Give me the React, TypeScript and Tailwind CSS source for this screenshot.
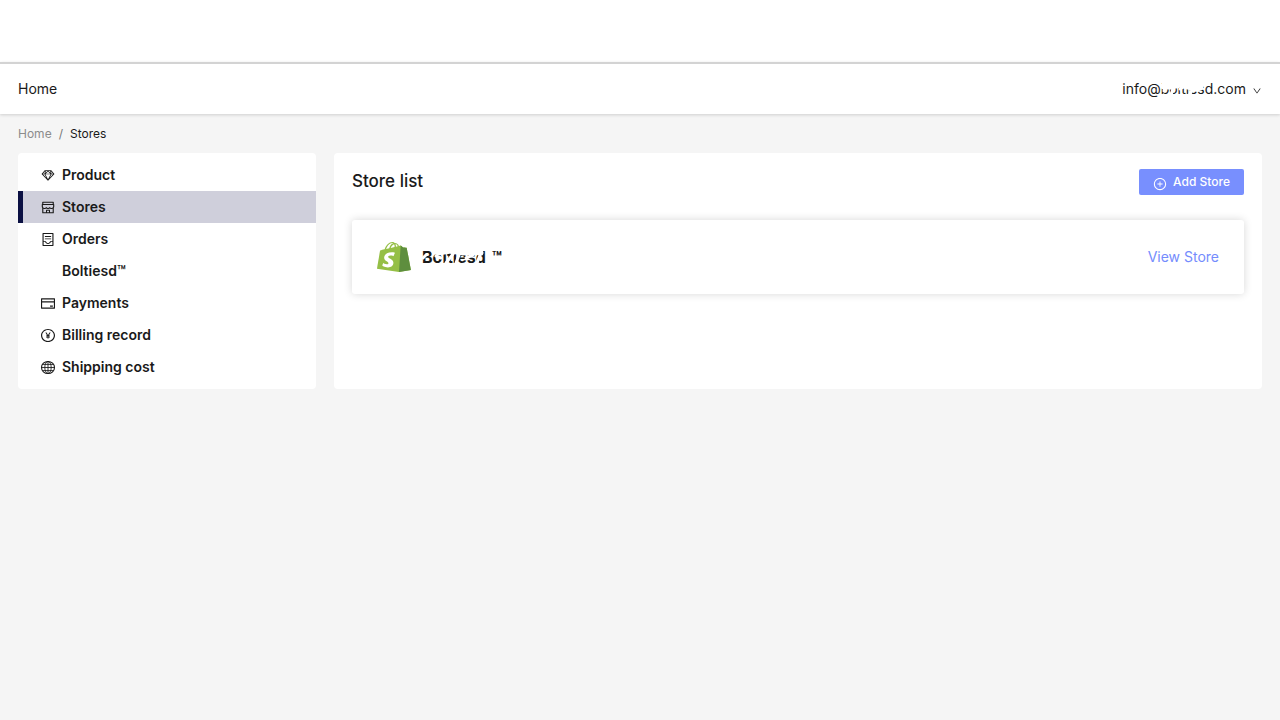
import * as React from "react";
import {
  AiOutlineContainer,
  AiOutlineCreditCard,
  AiOutlineDown,
  AiOutlinePayCircle,
  AiOutlinePlusCircle,
  AiOutlineShop,
  AiOutlineSketch,
} from "react-icons/ai";
import type { IconBaseProps } from "react-icons";
import clsx from "clsx";

function GlobeIcon(props: IconBaseProps) {
  return (
    <svg viewBox="0 0 16 16" fill="none" stroke="currentColor" {...props}>
      <circle cx="8" cy="8" r="6.5" strokeWidth="1.1" />
      <ellipse cx="8" cy="8" rx="3.2" ry="6.5" strokeWidth="0.9" />
      <path d="M8 1.5v13M1.5 8h13M2.6 4.7h10.8M2.6 11.3h10.8" strokeWidth="0.9" />
    </svg>
  );
}

function ShopifyLogo() {
  return (
    <svg
      viewBox="0 0 256 292"
      preserveAspectRatio="none"
      className="h-[30px] w-[34px] shrink-0"
      aria-hidden="true"
    >
      <path
        fill="#95BF46"
        d="M223.774 57.34c-.201-1.46-1.48-2.268-2.537-2.357-1.055-.088-23.383-1.743-23.383-1.743s-15.507-15.395-17.209-17.099c-1.703-1.703-5.029-1.185-6.32-.805-.19.056-3.388 1.043-8.678 2.68-5.18-14.906-14.322-28.604-30.405-28.604-.444 0-.901.018-1.358.044C129.31 3.407 123.644.779 118.75.779c-37.465 0-55.364 46.835-60.976 70.635-14.558 4.511-24.9 7.718-26.221 8.133-8.126 2.549-8.383 2.805-9.45 10.462C21.3 95.806.038 260.235.038 260.235l165.678 31.042 89.77-19.42S223.973 58.8 223.775 57.34zM156.49 40.848l-14.019 4.339c.005-.988.01-1.96.01-3.023 0-9.264-1.286-16.723-3.349-22.636 8.287 1.04 13.806 10.469 17.358 21.32zm-27.638-19.483c2.304 5.773 3.802 14.058 3.802 25.238 0 .572-.005 1.095-.01 1.624-9.117 2.824-19.024 5.89-28.953 8.966 5.575-21.516 16.025-31.908 25.161-35.828zm-11.131-10.537c1.617 0 3.246.549 4.805 1.622-12.007 5.65-24.877 19.88-30.312 48.297l-22.886 7.088C75.694 46.16 90.81 10.828 117.72 10.828z"
      />
      <path
        fill="#5E8E3E"
        d="M221.237 54.983c-1.055-.088-23.383-1.743-23.383-1.743s-15.507-15.395-17.209-17.099c-.637-.634-1.496-.959-2.394-1.099l-12.527 256.233 89.762-19.418S223.972 58.8 223.774 57.34c-.201-1.46-1.48-2.268-2.537-2.357"
      />
      <path
        fill="#FFF"
        d="M135.242 104.585l-11.069 32.926s-9.698-5.176-21.586-5.176c-17.428 0-18.305 10.937-18.305 13.693 0 15.038 39.2 20.8 39.2 56.024 0 27.713-17.577 45.558-41.277 45.558-28.44 0-42.984-17.7-42.984-17.7l7.615-25.16s14.95 12.835 27.565 12.835c8.243 0 11.596-6.49 11.596-11.232 0-19.616-32.16-20.491-32.16-52.724 0-27.129 19.472-53.382 58.778-53.382 15.145 0 22.627 4.338 22.627 4.338"
      />
    </svg>
  );
}

const menu = [
  { title: "Product", icon: AiOutlineSketch },
  { title: "Stores", icon: AiOutlineShop, active: true },
  { title: "Orders", icon: AiOutlineContainer },
  { title: "Boltiesd™" },
  { title: "Payments", icon: AiOutlineCreditCard },
  { title: "Billing record", icon: AiOutlinePayCircle },
  { title: "Shipping cost", icon: GlobeIcon },
];

function Header() {
  return (
    <header className="relative flex h-[52px] items-center justify-between border-t-2 border-[#d3d3d3] bg-white px-[18px] text-sm shadow-[0_1px_3px_rgba(0,0,0,0.16)]">
      <a href="#">Home</a>
      <button type="button" className="flex items-center gap-1.5">
        <span className="relative">
          info@boltiesd.com
          {/* Scribble over the account name */}
          <svg
            viewBox="0 0 48 20"
            fill="none"
            stroke="#fff"
            strokeLinecap="round"
            className="absolute top-0 left-[37px] h-5 w-12"
            aria-hidden="true"
          >
            <path d="M5 7L12 7L21 5L33 8L41 8" strokeWidth="7" />
            <path d="M5 12L6 10M12 16L14 10M31 15L34 9M21 10L24 8" strokeWidth="3" />
          </svg>
        </span>
        <AiOutlineDown className="mt-1 size-2.5" />
      </button>
    </header>
  );
}

function SideMenu() {
  return (
    <nav className="w-[298px] shrink-0 rounded bg-white py-1.5 text-sm font-semibold">
      <ul>
        {menu.map(({ title, icon: Icon, active }) => (
          <li key={title}>
            <a
              href="#"
              className={clsx(
                "flex h-8 items-center gap-1.5 border-l-[5px] pl-[17px]",
                active ? "border-[#0b1043] bg-[#cfcfdb]" : "border-transparent"
              )}
            >
              <span className="w-4">
                {Icon && <Icon preserveAspectRatio="none" className="h-[15px] w-4" />}
              </span>
              {title}
            </a>
          </li>
        ))}
      </ul>
    </nav>
  );
}

function StoreCard() {
  return (
    <article className="flex h-[74px] items-center rounded-[3px] bg-white px-[25px] shadow-[0_0_8px_rgba(0,0,0,0.16)]">
      <ShopifyLogo />
      <h2 className="relative ml-[11px] flex items-center gap-1.5 text-base font-bold">
        Boltiesd <span>™</span>
        {/* Scribble over the store name */}
        <svg
          viewBox="0 0 70 24"
          fill="none"
          stroke="#fff"
          strokeLinecap="round"
          className="absolute top-0 left-0 h-6 w-[70px]"
          aria-hidden="true"
        >
          <path d="M12 6L16 8L29 6L41 8L54 7L59 8" strokeWidth="5" />
          <path d="M1 13L4 10M14 11L19 13M24 18L31 9M34 18L37 10M44 13L51 10M55 18L58 10" strokeWidth="3" />
        </svg>
      </h2>
      <a href="#" className="ml-auto text-sm text-[#748cfd]">
        View Store
      </a>
    </article>
  );
}

export default function App() {
  return (
    <div className="min-h-screen bg-[#f5f5f5] font-['Inter',sans-serif] text-[#1a1a1a]">
      <div className="h-[62px] bg-white" />
      <Header />
      <nav aria-label="Breadcrumb" className="flex h-[39px] items-center gap-[7px] px-[18px] text-xs">
        <a href="#" className="text-[#8c8c8c]">
          Home
        </a>
        <span className="text-[#777777]">/</span>
        <span>Stores</span>
      </nav>
      <div className="flex gap-[18px] px-[18px]">
        <SideMenu />
        <main className="flex-1 rounded bg-white p-[18px] pt-4">
          <div className="mb-[25px] flex items-start justify-between">
            <h1 className="text-[17px] leading-6 font-medium">Store list</h1>
            <button
              type="button"
              className="flex h-[26px] items-center gap-1.5 rounded-xs bg-[#788ffe] px-3.5 text-xs font-medium text-white"
            >
              <AiOutlinePlusCircle className="mt-1 size-3.5" />
              Add Store
            </button>
          </div>
          <StoreCard />
        </main>
      </div>
    </div>
  );
}
